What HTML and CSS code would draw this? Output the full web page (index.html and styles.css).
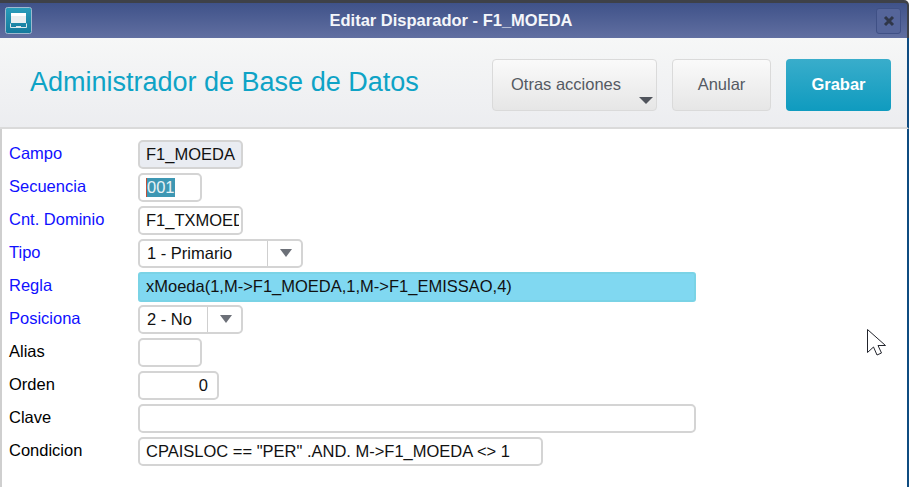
FILE: index.html
```html
<!DOCTYPE html>
<html lang="es">
<head>
  <meta charset="UTF-8" />
  <meta name="viewport" content="width=device-width, initial-scale=1" />
  <title>Editar Disparador - F1_MOEDA</title>
  <link rel="stylesheet" href="styles.css">
</head>
<body>

  <div class="ventana">

    <div class="barra-titulo">
      <span class="icono-app">
        <svg width="27" height="27" viewBox="0 0 27 27">
          <defs>
            <linearGradient id="fondoIcono" x1="0" y1="0" x2="0" y2="1">
              <stop offset="0" stop-color="#2a9dbb" />
              <stop offset="1" stop-color="#14799c" />
            </linearGradient>
          </defs>
          <rect x="0.5" y="0.5" width="26" height="26" rx="2" fill="url(#fondoIcono)" stroke="#9fb9cf" />
          <rect x="6" y="6" width="15" height="10" fill="#e9eef0" />
          <rect x="6" y="6" width="15" height="3" fill="#ffffff" />
          <path d="M5.5 16.5v4h16v-4" fill="none" stroke="#dce8ee" />
          <rect x="11" y="19" width="5" height="2" fill="#dce8ee" />
        </svg>
      </span>
      <span class="titulo-ventana">Editar Disparador - F1_MOEDA</span>
      <button class="btn-cerrar" aria-label="Cerrar">
        <svg width="12" height="12" viewBox="0 0 12 12">
          <path d="M2 2l8 8M10 2l-8 8" stroke="#2f3648" stroke-width="3" />
        </svg>
      </button>
    </div>

    <div class="cabecera">
      <h1>Administrador de Base de Datos</h1>
      <div class="acciones">
        <button class="btn btn-otras">Otras acciones<span class="flecha"></span></button>
        <button class="btn btn-anular">Anular</button>
        <button class="btn btn-grabar">Grabar</button>
      </div>
    </div>

    <div class="formulario">
      <div class="fila">
        <label class="obligatorio">Campo</label>
        <div class="campo campo-105 solo-lectura">F1_MOEDA</div>
      </div>
      <div class="fila">
        <label class="obligatorio">Secuencia</label>
        <div class="campo campo-64"><span class="seleccion">001</span></div>
      </div>
      <div class="fila">
        <label class="obligatorio">Cnt. Dominio</label>
        <div class="campo campo-105"><span class="recorte">F1_TXMOEDA</span></div>
      </div>
      <div class="fila">
        <label class="obligatorio">Tipo</label>
        <div class="combo combo-tipo">
          <span class="combo-texto">1 - Primario</span>
          <span class="combo-flecha"></span>
        </div>
      </div>
      <div class="fila">
        <label class="obligatorio">Regla</label>
        <div class="campo campo-ancho resaltado">xMoeda(1,M-&gt;F1_MOEDA,1,M-&gt;F1_EMISSAO,4)</div>
      </div>
      <div class="fila">
        <label class="obligatorio">Posiciona</label>
        <div class="combo combo-posiciona">
          <span class="combo-texto">2 - No</span>
          <span class="combo-flecha"></span>
        </div>
      </div>
      <div class="fila">
        <label>Alias</label>
        <div class="campo campo-64"></div>
      </div>
      <div class="fila">
        <label>Orden</label>
        <div class="campo campo-81 numero">0</div>
      </div>
      <div class="fila">
        <label>Clave</label>
        <div class="campo campo-ancho"></div>
      </div>
      <div class="fila">
        <label>Condicion</label>
        <div class="campo campo-405">CPAISLOC == "PER" .AND. M-&gt;F1_MOEDA &lt;&gt; 1</div>
      </div>
    </div>

    <!-- puntero del raton -->
    <svg class="puntero" width="20" height="30" viewBox="0 0 20 30">
      <path d="M1.5 1.500v23l6-5.500 3.500 8 4.500-2-3.500-7.500h7.500z" fill="#fff" stroke="#22242c" stroke-width="1" />
    </svg>

  </div>

</body>
</html>
```

FILE: styles.css
```css
body {
  font-family: "Liberation Sans", Arial, sans-serif;
  font-size: 16.5px;
  margin: 0;
  background-color: white;
  overflow: hidden;
}

.ventana {
  position: relative;
  width: 909px;
  height: 487px;
}

.barra-titulo {
  display: flex;
  align-items: center;
  justify-content: space-between;
  box-sizing: border-box;
  height: 38px;
  padding: 3px 6px 0 5px;
  border-top: 3px solid #3e4148;
  border-right: 2px solid #3e4148;
  border-top-right-radius: 5px;
  background: linear-gradient(#3f5289, #616fa1);
}

.icono-app {
  display: flex;
  margin-top: -3px;
}

.titulo-ventana {
  color: #f4f6fa;
  font-size: 16.5px;
  font-weight: bold;
  padding: 0 6px 4px 0;
}

.btn-cerrar {
  display: flex;
  align-items: center;
  justify-content: center;
  width: 25px;
  height: 26px;
  margin-top: -3px;
  padding: 0;
  background: #55659a;
  border: 1px solid #3f5085;
  border-radius: 3px;
}

.cabecera {
  display: flex;
  align-items: flex-start;
  justify-content: space-between;
  box-sizing: border-box;
  height: 91px;
  padding: 21px 16px 0 30px;
  background: linear-gradient(#f6f7f7, #ecedf0);
  border-bottom: 2px solid #dadada;
  border-right: 2px solid #0f4c81;
}

h1 {
  margin: 8px 0 0;
  color: #0ea3c6;
  font-size: 27px;
  font-weight: normal;
}

.acciones {
  display: flex;
  gap: 15px;
}

.btn {
  position: relative;
  box-sizing: border-box;
  height: 52px;
  padding: 0 0 2px;
  font-family: inherit;
  font-size: 16.5px;
  color: #555a63;
  background: linear-gradient(#fafafa, #e6e6e6);
  border: 1px solid #dadada;
  border-radius: 4px;
}

.btn-otras {
  width: 165px;
  text-align: center;
  padding-right: 17px;
}

.btn-anular {
  width: 99px;
}

.btn-grabar {
  width: 105px;
  color: white;
  font-weight: bold;
  background: linear-gradient(#39adcb, #0f9bbf);
  border: none;
}

.flecha {
  position: absolute;
  right: 3px;
  bottom: 6px;
  border-left: 7px solid transparent;
  border-right: 7px solid transparent;
  border-top: 7px solid #50545c;
}

.formulario {
  display: flex;
  flex-direction: column;
  gap: 4px;
  box-sizing: border-box;
  height: 358px;
  padding: 11px 0 0 7px;
  border-left: 2px solid #cfcfcf;
  border-right: 2px solid #0f4c81;
}

.fila {
  display: flex;
  align-items: center;
  height: 29px;
}

label {
  width: 129px;
  flex-shrink: 0;
  margin-top: -2px;
}

.obligatorio {
  color: #1010ff;
}

.campo {
  box-sizing: border-box;
  height: 29px;
  line-height: 24px;
  padding: 0 6px;
  border: 2px solid #d4d4d4;
  border-radius: 5px;
  background-color: white;
  color: #111;
  overflow: hidden;
  white-space: nowrap;
}

.campo-64 { width: 64px; }
.campo-81 { width: 81px; }
.campo-105 { width: 105px; }
.campo-405 { width: 405px; }
.campo-ancho { width: 558px; }

.solo-lectura {
  background-color: #e9ecf2;
}

.resaltado {
  background-color: #80d8f1;
  border-color: #7ad3e6;
  border-radius: 3px;
  height: 30px;
}

.numero {
  text-align: right;
  padding-right: 9px;
}

.recorte {
  display: block;
  overflow: hidden;
  margin-right: -4px;
}

.seleccion {
  display: inline-block;
  line-height: 19px;
  color: #e8f2f6;
  background-color: #3d97b3;
  border-left: 1px solid #c0503a;
}

.combo {
  display: flex;
  box-sizing: border-box;
  height: 29px;
  line-height: 25px;
  border: 2px solid #d4d4d4;
  border-radius: 5px;
  background-color: white;
  color: #111;
}

.combo-tipo { width: 165px; }
.combo-posiciona { width: 105px; }

.combo-texto {
  flex: 1;
  padding-left: 7px;
  border-right: 1px solid #cfcfcf;
}

.combo-flecha {
  width: 33px;
  flex-shrink: 0;
  position: relative;
}

.combo-flecha::after {
  content: "";
  position: absolute;
  left: 12px;
  top: 8px;
  border-left: 6px solid transparent;
  border-right: 6px solid transparent;
  border-top: 8px solid #6c7078;
}

.puntero {
  position: absolute;
  left: 866px;
  top: 328px;
}
```
